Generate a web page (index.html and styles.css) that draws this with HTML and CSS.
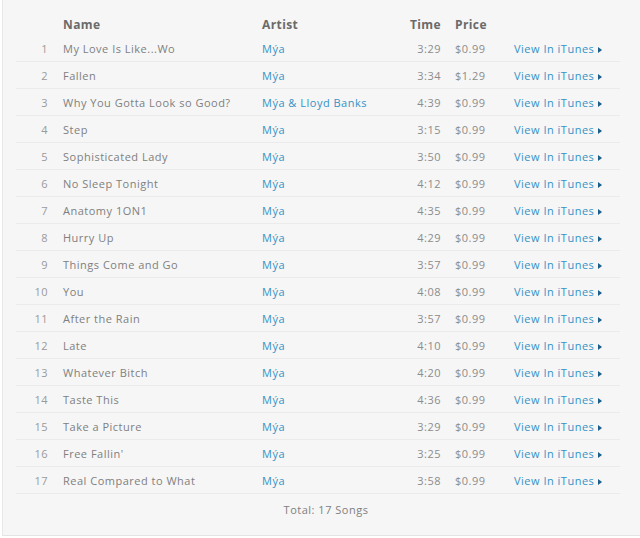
FILE: index.html
```html
<!DOCTYPE html>
<html lang="en">
<head>
    <meta charset="UTF-8">
    <title>Mýa - Songs</title>
    <link rel="stylesheet" href="styles.css">
</head>
<body>
    <div class="panel">
        <div class="tracks">
            <div class="row head">
                <div class="num"></div>
                <div class="name">Name</div>
                <div class="artist">Artist</div>
                <div class="time">Time</div>
                <div class="price">Price</div>
                <div class="link"></div>
            </div>
            <div class="row"><div class="num">1</div><div class="name">My Love Is Like...Wo</div><div class="artist"><a href="#">Mýa</a></div><div class="time">3:29</div><div class="price">$0.99</div><div class="link"><a href="#">View In iTunes<span class="arrow"></span></a></div></div>
            <div class="row"><div class="num">2</div><div class="name">Fallen</div><div class="artist"><a href="#">Mýa</a></div><div class="time">3:34</div><div class="price">$1.29</div><div class="link"><a href="#">View In iTunes<span class="arrow"></span></a></div></div>
            <div class="row"><div class="num">3</div><div class="name">Why You Gotta Look so Good?</div><div class="artist"><a href="#">Mýa &amp; Lloyd Banks</a></div><div class="time">4:39</div><div class="price">$0.99</div><div class="link"><a href="#">View In iTunes<span class="arrow"></span></a></div></div>
            <div class="row"><div class="num">4</div><div class="name">Step</div><div class="artist"><a href="#">Mýa</a></div><div class="time">3:15</div><div class="price">$0.99</div><div class="link"><a href="#">View In iTunes<span class="arrow"></span></a></div></div>
            <div class="row"><div class="num">5</div><div class="name">Sophisticated Lady</div><div class="artist"><a href="#">Mýa</a></div><div class="time">3:50</div><div class="price">$0.99</div><div class="link"><a href="#">View In iTunes<span class="arrow"></span></a></div></div>
            <div class="row"><div class="num">6</div><div class="name">No Sleep Tonight</div><div class="artist"><a href="#">Mýa</a></div><div class="time">4:12</div><div class="price">$0.99</div><div class="link"><a href="#">View In iTunes<span class="arrow"></span></a></div></div>
            <div class="row"><div class="num">7</div><div class="name">Anatomy 1ON1</div><div class="artist"><a href="#">Mýa</a></div><div class="time">4:35</div><div class="price">$0.99</div><div class="link"><a href="#">View In iTunes<span class="arrow"></span></a></div></div>
            <div class="row"><div class="num">8</div><div class="name">Hurry Up</div><div class="artist"><a href="#">Mýa</a></div><div class="time">4:29</div><div class="price">$0.99</div><div class="link"><a href="#">View In iTunes<span class="arrow"></span></a></div></div>
            <div class="row"><div class="num">9</div><div class="name">Things Come and Go</div><div class="artist"><a href="#">Mýa</a></div><div class="time">3:57</div><div class="price">$0.99</div><div class="link"><a href="#">View In iTunes<span class="arrow"></span></a></div></div>
            <div class="row"><div class="num">10</div><div class="name">You</div><div class="artist"><a href="#">Mýa</a></div><div class="time">4:08</div><div class="price">$0.99</div><div class="link"><a href="#">View In iTunes<span class="arrow"></span></a></div></div>
            <div class="row"><div class="num">11</div><div class="name">After the Rain</div><div class="artist"><a href="#">Mýa</a></div><div class="time">3:57</div><div class="price">$0.99</div><div class="link"><a href="#">View In iTunes<span class="arrow"></span></a></div></div>
            <div class="row"><div class="num">12</div><div class="name">Late</div><div class="artist"><a href="#">Mýa</a></div><div class="time">4:10</div><div class="price">$0.99</div><div class="link"><a href="#">View In iTunes<span class="arrow"></span></a></div></div>
            <div class="row"><div class="num">13</div><div class="name">Whatever Bitch</div><div class="artist"><a href="#">Mýa</a></div><div class="time">4:20</div><div class="price">$0.99</div><div class="link"><a href="#">View In iTunes<span class="arrow"></span></a></div></div>
            <div class="row"><div class="num">14</div><div class="name">Taste This</div><div class="artist"><a href="#">Mýa</a></div><div class="time">4:36</div><div class="price">$0.99</div><div class="link"><a href="#">View In iTunes<span class="arrow"></span></a></div></div>
            <div class="row"><div class="num">15</div><div class="name">Take a Picture</div><div class="artist"><a href="#">Mýa</a></div><div class="time">3:29</div><div class="price">$0.99</div><div class="link"><a href="#">View In iTunes<span class="arrow"></span></a></div></div>
            <div class="row"><div class="num">16</div><div class="name">Free Fallin'</div><div class="artist"><a href="#">Mýa</a></div><div class="time">3:25</div><div class="price">$0.99</div><div class="link"><a href="#">View In iTunes<span class="arrow"></span></a></div></div>
            <div class="row"><div class="num">17</div><div class="name">Real Compared to What</div><div class="artist"><a href="#">Mýa</a></div><div class="time">3:58</div><div class="price">$0.99</div><div class="link"><a href="#">View In iTunes<span class="arrow"></span></a></div></div>
        </div>
        <div class="total">Total: 17 Songs</div>
    </div>
</body>
</html>
```

FILE: styles.css
```css
body {
    margin: 0;
    background: #fff;
    font-family: 'Open Sans', 'DejaVu Sans', sans-serif;
    font-size: 11px;
    letter-spacing: 0.5px;
    color: #808080;
}

.panel {
    margin: 0 0 2px 2px;
    background: #f6f6f6;
    border-left: 1px solid #e8e8e8;
    border-bottom: 1px solid #e4e4e4;
    padding: 14px 0 0 13px;
    height: 521px;
}

.tracks {
    width: 604px;
}

.row {
    display: grid;
    grid-template-columns: 40px 206px 130px 49px 73px 1fr;
    align-items: center;
    height: 26px;
    border-bottom: 1px solid #ebebeb;
}

.row.head {
    height: 21px;
    border-bottom: none;
    font-size: 12px;
    font-weight: bold;
    letter-spacing: 0.4px;
    color: #6a6a6a;
}

.num {
    text-align: right;
    padding-right: 8px;
    color: #9a9a9a;
}

.name {
    padding-left: 7px;
    white-space: nowrap;
}

.time {
    text-align: right;
    color: #8c8c8c;
}

.head .time,
.head .price {
    color: #6a6a6a;
}

.price {
    padding-left: 14px;
    color: #8c8c8c;
}

a {
    color: #3592c6;
    text-decoration: none;
    white-space: nowrap;
}

.arrow {
    display: inline-block;
    width: 0;
    height: 0;
    margin-left: 4px;
    border-top: 3.5px solid transparent;
    border-bottom: 3.5px solid transparent;
    border-left: 4px solid #1b5f8a;
    vertical-align: 0;
}

.total {
    width: 604px;
    text-align: center;
    padding: 8px 0 0 8px;
    color: #808080;
}
```
